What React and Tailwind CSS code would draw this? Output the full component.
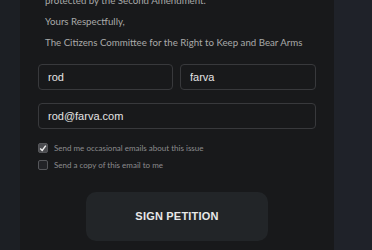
import React, { useState } from 'react';

function App() {
  const [first, setFirst] = useState('rod');
  const [last, setLast] = useState('farva');
  const [email, setEmail] = useState('rod@farva.com');
  const [updates, setUpdates] = useState(true);
  const [copy, setCopy] = useState(false);

  return (
    <div className="flex h-[250px] w-[372px] overflow-hidden bg-[#1c1f24]">
      <div className="w-[20px] shrink-0 bg-[#1c1f24]" />

      {/* Petition panel */}
      <div className="w-[314px] shrink-0 bg-[#18191b] px-[18px]">
        <div className="mt-[-6px] whitespace-nowrap pl-[7px] font-['Lato',sans-serif] text-[9.7px] leading-[13px] text-[#a9a9a9]">
          <p>protected by the Second Amendment.</p>
          <p className="mt-[8px]">Yours Respectfully,</p>
          <p className="mt-[8px]">The Citizens Committee for the Right to Keep and Bear Arms</p>
        </div>

        <div className="mt-[15px] flex gap-[7px]">
          <input
            value={first}
            onChange={(e) => setFirst(e.target.value)}
            className="h-[26px] w-[135px] rounded-[4px] border border-[#38393c] bg-[#18191b] px-[9px] font-['Liberation_Sans',sans-serif] text-[11px] text-[#e4e4e4] outline-none"
          />
          <input
            value={last}
            onChange={(e) => setLast(e.target.value)}
            className="h-[26px] w-[136px] rounded-[4px] border border-[#38393c] bg-[#18191b] px-[9px] font-['Liberation_Sans',sans-serif] text-[11px] text-[#e4e4e4] outline-none"
          />
        </div>
        <input
          value={email}
          onChange={(e) => setEmail(e.target.value)}
          className="mt-[13px] block h-[26px] w-[278px] rounded-[4px] border border-[#38393c] bg-[#18191b] px-[9px] font-['Liberation_Sans',sans-serif] text-[11px] text-[#e4e4e4] outline-none"
        />

        <div className="mt-[13px] flex flex-col gap-[5px] font-['Lato',sans-serif] text-[8px] text-[#8c8c8e]">
          <label className="flex items-center gap-[6px]" onClick={() => setUpdates(!updates)}>
            <span className="flex h-[10px] w-[10px] items-center justify-center rounded-[2px] border border-[#55565a] bg-[#4a4b4f]">
              {updates && (
                <svg width="8" height="8" viewBox="0 0 10 10">
                  <path d="M1.5 5.5 L4 8 L8.5 2" fill="none" stroke="#f0f0f0" strokeWidth="1.8" />
                </svg>
              )}
            </span>
            Send me occasional emails about this issue
          </label>
          <label className="flex items-center gap-[6px]" onClick={() => setCopy(!copy)}>
            <span className="flex h-[10px] w-[10px] items-center justify-center rounded-[2px] border border-[#55565a] bg-[#222327]">
              {copy && (
                <svg width="8" height="8" viewBox="0 0 10 10">
                  <path d="M1.5 5.5 L4 8 L8.5 2" fill="none" stroke="#f0f0f0" strokeWidth="1.8" />
                </svg>
              )}
            </span>
            Send a copy of this email to me
          </label>
        </div>

        <div className="mt-[21px] flex justify-center">
          <button className="h-[49px] w-[182px] rounded-[10px] bg-[#222528] font-['Liberation_Sans',sans-serif] text-[11px] font-bold tracking-[0.2px] text-[#e8e8e8]">
            SIGN PETITION
          </button>
        </div>
      </div>

      <div className="flex-1 bg-[#1f2229]" />
    </div>
  );
}

export default App;
